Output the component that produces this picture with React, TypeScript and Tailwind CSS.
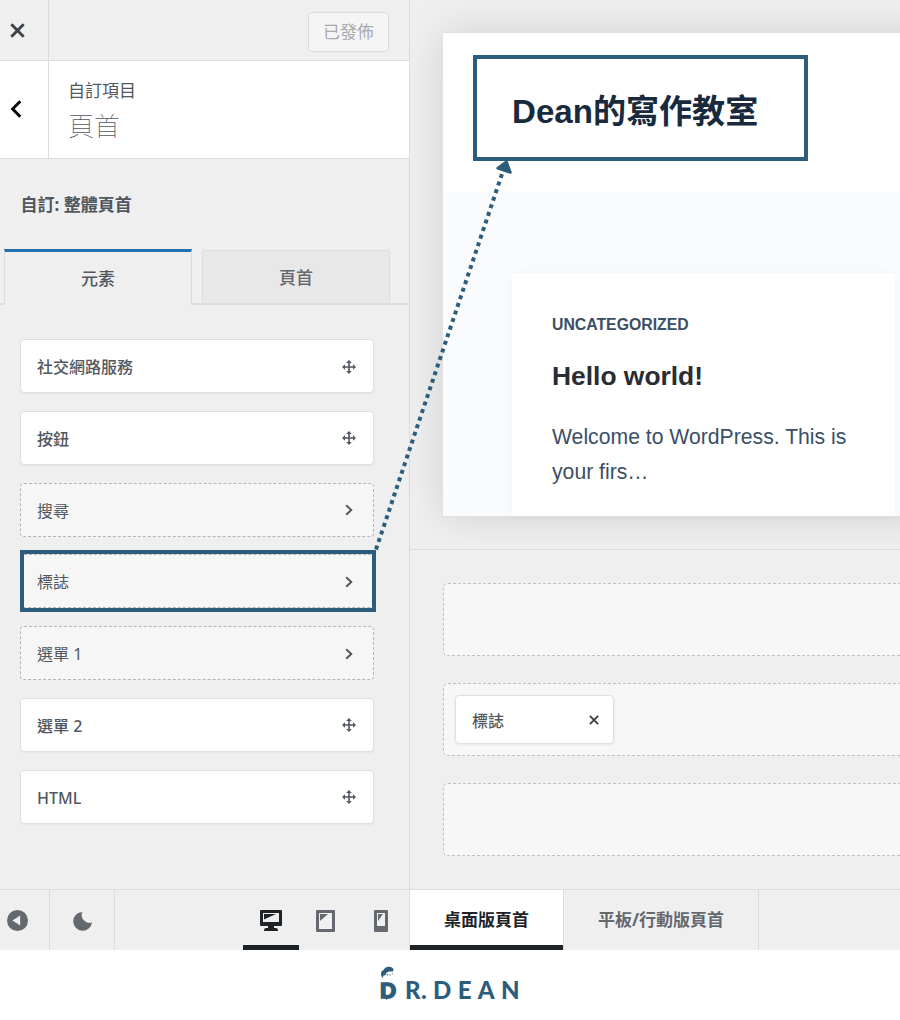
import clsx from "clsx";

type Item = { label: string; placed?: boolean };

const items: Item[] = [
  { label: "社交網路服務" },
  { label: "按鈕" },
  { label: "搜尋", placed: true },
  { label: "標誌", placed: true },
  { label: "選單 1", placed: true },
  { label: "選單 2" },
  { label: "HTML" },
];

function Cross({ className }: { className?: string }) {
  return (
    <svg viewBox="0 0 16 16" className={className} fill="none" stroke="currentColor" strokeWidth="3.1">
      <path d="M1.400 1.400l13.200 13.200M14.600 1.400L1.400 14.600" />
    </svg>
  );
}

function Move() {
  return (
    <svg viewBox="0 0 14 14" className="size-3.5" fill="currentColor">
      <path d="M6.200 2h1.600v10h-1.600zM2 6.200h10v1.600H2z" />
      <path d="M7 0l2.800 3H4.200zM7 14l2.800-3H4.200zM0 7l3-2.800v5.600zM14 7l-3-2.800v5.600z" />
    </svg>
  );
}

function ChevronRight() {
  return (
    <svg viewBox="0 0 8 12" className="mr-[3px] h-3 w-2" fill="none" stroke="currentColor" strokeWidth="1.9">
      <path d="M1.2 1.2L6.3 6l-5.1 4.8" />
    </svg>
  );
}

function Element({ label, placed }: Item) {
  return (
    <li
      className={clsx(
        "flex h-[54px] items-center justify-between rounded-[4px] border pl-4 pr-[17px] pt-0.5 text-base text-[#50575e]",
        placed ? "border-dashed border-[#b5b5b5] bg-[#f6f6f6] font-normal" : "border-[#dfdfe8] bg-white font-medium shadow-[0_1px_2px_rgba(0,0,0,0.05)]"
      )}
    >
      <span>{label}</span>
      <span className="-mt-px">{placed ? <ChevronRight /> : <Move />}</span>
    </li>
  );
}

function Sidebar() {
  return (
    <aside className="flex w-[410px] shrink-0 flex-col border-r border-[#dcdcde]">
      <div className="flex h-[61px] border-b border-[#dcdcde]">
        <button className="flex w-[49px] items-center border-r border-[#dcdcde] pl-[10px] pt-px text-[#3c434a]">
          <Cross className="size-[15px]" />
        </button>
        <div className="flex flex-1 justify-end pr-5 pt-3">
          <button className="h-10 w-[81px] rounded-[4px] border border-[#dcdcde] bg-[#f5f5f5] text-[17px] text-[#a7aaad]">已發佈</button>
        </div>
      </div>

      <div className="flex h-[98px] border-b border-[#dcdcde] bg-white">
        <button className="flex w-[49px] items-center border-r border-[#dcdcde] pl-[10px] text-black">
          <svg viewBox="0 0 12 18" className="-mt-0.5 h-[18px] w-3" fill="none" stroke="currentColor" strokeWidth="2.9">
            <path d="M10.3 1.2L2.6 9l7.7 7.8" />
          </svg>
        </button>
        <div className="pl-[19px] pt-[17px] text-[#50575e]">
          <p className="text-[17px] leading-[26px]">自訂項目</p>
          <h2 className="pt-0.5 text-[26px] font-thin leading-[40px]">頁首</h2>
        </div>
      </div>

      <h3 className="h-[90px] pl-[20.5px] pt-[33px] text-[17px] font-bold leading-[26px] text-[#50575e]">自訂: 整體頁首</h3>

      <div className="flex h-14">
        <span className="w-1 border-b-2 border-[#dfdfdf]" />
        <button className="w-[188px] border-x border-t-3 border-x-[#dcdcdc] border-t-[#2271b1] text-[17px] font-medium text-[#50575e]">元素</button>
        <span className="w-[10px] border-b-2 border-[#dfdfdf]" />
        <button className="mt-px w-[188px] border border-b-2 border-[#dcdcdc] bg-[#e8e8e8] pt-0.5 text-[17px] font-medium text-[#646970]">頁首</button>
        <span className="flex-1 border-b-2 border-[#dfdfdf]" />
      </div>

      <ul className="flex flex-col gap-[17.75px] pl-5 pr-[35px] pt-[34px]">
        {items.map((item) => (
          <Element key={item.label} {...item} />
        ))}
      </ul>

      <footer className="mt-auto flex h-[61px] border-t border-[#dcdcde] text-[#646970]">
        <button className="flex w-[50px] items-center border-r border-[#dcdcde] pl-[7px] pt-px">
          <svg viewBox="0 0 21 21" className="size-[21px]">
            <circle cx="10.5" cy="10.5" r="10.5" fill="currentColor" />
            <path d="M13.2 5.4v10.2L5.4 10.5z" fill="#eee" />
          </svg>
        </button>
        <button className="flex w-[65px] items-center justify-center border-r border-[#dcdcde] pl-px pt-px">
          <svg viewBox="0 0 20 20" className="size-5" fill="currentColor">
            <path d="M9.3 1A9.4 9.4 0 1 0 19 11.400A7.800 7.800 0 0 1 9.300 1z" />
          </svg>
        </button>
        <div className="ml-auto flex pr-px">
          <button className="flex w-[56px] items-center justify-center border-b-5 border-[#1d2327] pt-1.5 text-[#1d2327]">
            <svg viewBox="0 0 22 22" className="h-[22px] w-[22px]" fill="currentColor">
              <path fillRule="evenodd" d="M1 0h20q1 0 1 1v14q0 1-1 1h-7v2h2q2 0 2 3H4q0-3 2-3h2v-2H1q-1 0-1-1V1q0-1 1-1zm2 3v9h16V3z" />
              <path d="M4 4h12L4 9.500z" />
            </svg>
          </button>
          <button className="flex w-[54px] items-center justify-center pr-px pt-0.5">
            <svg viewBox="0 0 19 22" className="h-[22px] w-[19px]" fill="currentColor">
              <path fillRule="evenodd" d="M1 0h17q1 0 1 1v20q0 1-1 1H1q-1 0-1-1V1q0-1 1-1zm2 3v16h13V3z" />
              <path d="M4 4h8l-8 7z" />
            </svg>
          </button>
          <button className="flex w-[55px] items-center justify-center pt-0.5">
            <svg viewBox="0 0 14 22" className="h-[22px] w-[14px]" fill="currentColor">
              <path fillRule="evenodd" d="M1 0h12q1 0 1 1v20q0 1-1 1H1q-1 0-1-1V1q0-1 1-1zm2 3v13h8V3z" />
              <path d="M4 4h5l-5 7z" />
            </svg>
          </button>
        </div>
      </footer>
    </aside>
  );
}

function Preview() {
  return (
    <div className="h-[549px] overflow-hidden pl-[33px] pt-[33px]">
      <div className="-mr-10 flex h-[483px] flex-col bg-white font-['Liberation_Sans','Noto_Sans_CJK_TC',sans-serif] shadow-[0_0_0_1px_#e0e0e0,0_0_40px_rgba(0,0,0,0.13)]">
        <header className="h-[159px] pl-[30px] pt-[22px]">
          <div className="flex h-[106px] w-[335px] items-center border-4 border-[#2c5d7c] pl-[35px] pt-2">
            <h1 className="text-[33.1px] font-bold leading-none text-[#192a3d]">Dean的寫作教室</h1>
          </div>
        </header>
        <main className="flex-1 bg-[#fafbfc] pl-[69px] pr-[45px] pt-[81px]">
          <article className="h-full bg-white pl-10 pt-[42px] shadow-[0_0_14px_rgba(40,60,90,0.03)]">
            <p className="text-[15.8px] font-bold leading-5 text-[#3a4f66]">UNCATEGORIZED</p>
            <h2 className="pt-[25px] text-[26.4px] font-bold leading-8 text-[#292c33]">Hello world!</h2>
            <p className="pt-[27px] text-[21.2px] leading-[35px] text-[#3a4f66]">
              Welcome to WordPress. This is
              <br />
              your firs…
            </p>
          </article>
        </main>
      </div>
    </div>
  );
}

function Row({ children }: { children?: React.ReactNode }) {
  return <div className="h-[73px] rounded-l-[5px] border border-r-0 border-dashed border-[#c0c0c0] bg-[#f7f7f7] p-[11px]">{children}</div>;
}

function Builder() {
  return (
    <section className="flex min-w-0 flex-1 flex-col">
      <Preview />
      <div className="flex flex-1 flex-col gap-[26.7px] border-t border-[#dcdcde] pl-[33px] pt-[33.4px]">
        <Row />
        <Row>
          <div className="flex h-[49px] w-[159px] items-center justify-between rounded-[4px] border border-[#dfdfe8] bg-white pl-4 pr-[14px] pt-0.5 text-base font-medium text-[#50575e] shadow-[0_1px_3px_rgba(0,0,0,0.08)]">
            標誌
            <Cross className="-mt-0.5 size-2.5 text-[#3c434a]" />
          </div>
        </Row>
        <Row />
      </div>
      <nav className="flex h-[61px] border-t border-[#dcdcde] text-[17px] font-bold">
        <button className="w-[153px] border-b-5 border-[#1d2327] bg-white pt-1 text-[#1d2327]">桌面版頁首</button>
        <button className="w-[196px] border-x border-[#dcdcde] text-[#646970]">平板/行動版頁首</button>
      </nav>
    </section>
  );
}

function Logo() {
  return (
    <div className="flex h-[70px] pl-[380px] pt-4 font-['Lato',sans-serif] text-[#2c5d7c]">
      <div className="flex w-[25px] flex-col">
        <svg viewBox="0 0 16 14" className="h-[14px] w-4" fill="currentColor">
          <path d="M2.500 12C.2 8.500.8 4.500 3.400 4.200 4.800 1.200 8.200.2 10.800 1c2.600.8 3.500 3 2.200 4.600L9.200 5.600C6.800 6 6 7.400 5.400 9.200L3.600 9.600z" />
          <path d="M6.500 8.200h1.600v1.100H6.500zM9.500 8.400h1.200v1H9.500zM11.800 7.300h1v1h-1z" />
        </svg>
        <div className="relative -mt-px">
          <span className="block w-4 origin-left scale-x-105 text-[20px] font-black leading-[22px] [-webkit-text-stroke:1.600px_#2c5d7c]">D</span>
          <svg viewBox="0 0 8 5" className="absolute left-[5px] top-[16px] h-[5px] w-2" fill="currentColor">
            <path d="M0 0h7L1 5z" />
          </svg>
        </div>
      </div>
      <div className="flex pt-2.5 text-[24px] font-black leading-7">
        <span className="w-4">R</span>
        <span className="w-3">.</span>
        <span className="tracking-[6.400px]">DEAN</span>
      </div>
    </div>
  );
}

export default function App() {
  return (
    <div className="relative h-[1020px] w-[900px] overflow-hidden bg-white font-['Noto_Sans','Noto_Sans_CJK_TC',sans-serif]">
      <div className="flex h-[950px] bg-[#efefef]">
        <Sidebar />
        <Builder />
      </div>
      <Logo />

      {/* callout: selected element -> site title */}
      <div className="absolute left-5 top-[550px] h-[62px] w-[356px] border-4 border-[#2c5d7c]" />
      <svg viewBox="0 0 140 400" className="pointer-events-none absolute left-[374px] top-[155px] h-[400px] w-[140px]">
        <path d="M2 394.500L129 16" fill="none" stroke="#2c5d7c" strokeWidth="4" strokeDasharray="4 4" />
        <path d="M132.500 6.500L136.500 17.500L123.500 13.200z" fill="#2c5d7c" stroke="#2c5d7c" strokeWidth="2.500" strokeLinejoin="round" />
      </svg>
    </div>
  );
}
